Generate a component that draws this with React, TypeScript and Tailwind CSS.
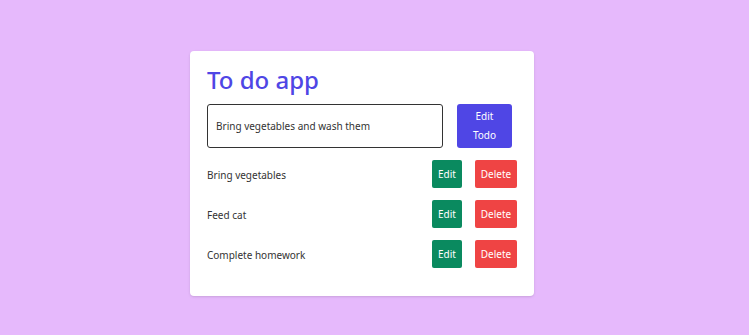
import React, { useState } from "react";

const initialTodos = ["Bring vegetables", "Feed cat", "Complete homework"];

export default function App() {
  const [todos] = useState(initialTodos);
  const [text, setText] = useState("Bring vegetables and wash them");

  return (
    <div
      className="min-h-screen w-full bg-[#e6b9fc] flex justify-center pt-[51px] pr-[25px]"
      style={{ fontFamily: '"Noto Sans", "Open Sans", sans-serif' }}
    >
      <div className="w-[344px] h-[245px] bg-white rounded-[4px] shadow-sm px-[17px] pt-[12px]">
        <h1 className="text-[24px] leading-[34px] font-medium text-[#4f46e5]">To do app</h1>

        <div className="flex items-stretch mt-[7px] pr-[5px] gap-[14px]">
          <input
            value={text}
            onChange={(e) => setText(e.target.value)}
            className="flex-1 h-[44px] border-[1.5px] border-[#333] rounded-[3px] px-[8px] text-[10px] text-[#333] outline-none"
          />
          <button className="w-[55px] h-[44px] bg-[#4f46e5] text-white rounded-[3px] text-[10px] leading-[19px]">
            Edit
            <br />
            Todo
          </button>
        </div>

        <ul className="mt-[12px] flex flex-col gap-[12px]">
          {todos.map((t) => (
            <li key={t} className="flex items-center h-[28px]">
              <span className="flex-1 pt-[3px] text-[10px] text-[#333]">{t}</span>
              <button className="w-[30px] h-[28px] bg-[#0a8a5f] text-white rounded-[2px] text-[10px]">
                Edit
              </button>
              <button className="ml-[13px] w-[42px] h-[28px] bg-[#ef4444] text-white rounded-[2px] text-[10px]">
                Delete
              </button>
            </li>
          ))}
        </ul>
      </div>
    </div>
  );
}
